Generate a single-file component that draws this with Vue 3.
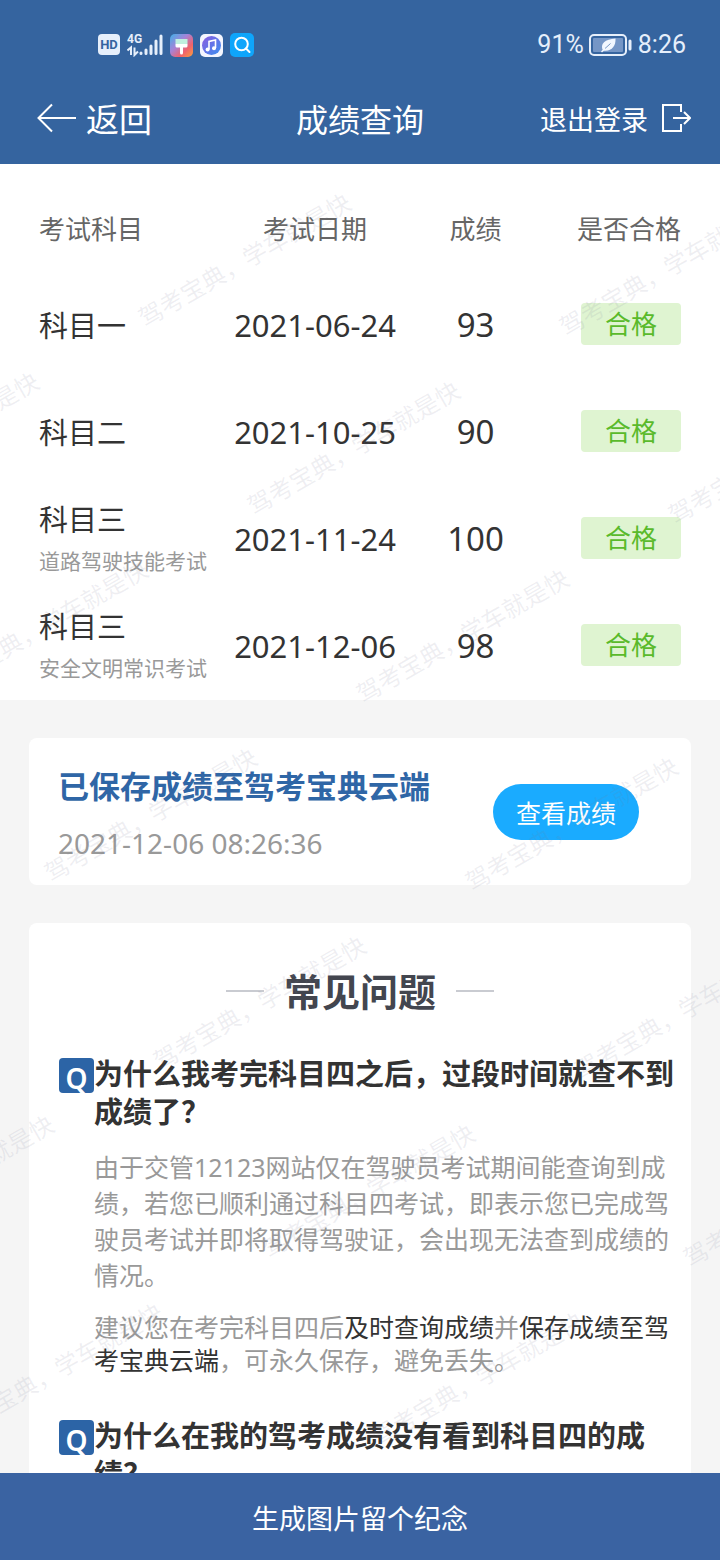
<script setup>
const results = [
  { subject: '科目一', date: '2021-06-24', score: 93 },
  { subject: '科目二', date: '2021-10-25', score: 90 },
  { subject: '科目三', note: '道路驾驶技能考试', date: '2021-11-24', score: 100 },
  { subject: '科目三', note: '安全文明常识考试', date: '2021-12-06', score: 98 },
]

// the watermark is repeated on a slanted lattice
const marks = []
for (let row = 0; row < 7; row++) {
  for (let col = -2; col < 2; col++) {
    const x = 151 + col * 421 + row * 109
    const y = 314 + col * 9 + row * 188
    if (x > -200 && x < 720) marks.push({ x, y })
  }
}
</script>

<template>
  <div class="screen">
    <header class="top">
      <div class="status">
        <div class="status-left">
          <svg width="22" height="22" viewBox="0 0 22 22">
            <rect x="0" y="0" width="22" height="21" rx="4" fill="#e6effb" />
            <text x="11" y="15" text-anchor="middle" font-size="13" font-weight="700" fill="#35649f">HD</text>
          </svg>
          <svg width="36" height="24" viewBox="0 0 36 24">
            <text x="0" y="10" font-size="12" font-weight="700" fill="#e6effb">4G</text>
            <path d="M0.5 17.5 4 14.5V22M7.500 14.5V22L11 18.5" fill="none" stroke="#e6effb" stroke-width="2" />
            <path d="M14 20v.5M19 17v3.500M24 13v7.500M29 8v12.500M34 3v17.500" stroke="#e6effb" stroke-width="3" stroke-linecap="round" />
          </svg>
          <svg width="23" height="23" viewBox="0 0 23 23">
            <defs>
              <linearGradient id="theme" x1="0" y1="0" x2="1" y2="1">
                <stop offset="0" stop-color="#3fb0e8" />
                <stop offset="0.4" stop-color="#a583d8" />
                <stop offset="0.7" stop-color="#f0626c" />
                <stop offset="1" stop-color="#f9a03c" />
              </linearGradient>
            </defs>
            <rect width="23" height="23" rx="5" fill="url(#theme)" />
            <path d="M5.500 5h12v5h-12z" fill="#bff0df" />
            <path d="M5.500 10h12v2q0 1.500-1.500 1.500h-3v5.500a1.500 1.500 0 0 1-3 0v-5.500H7q-1.500 0-1.500-1.500z" fill="#fff" />
          </svg>
          <svg width="23" height="23" viewBox="0 0 23 23">
            <defs>
              <linearGradient id="music" x1="0" y1="0" x2="1" y2="1">
                <stop offset="0" stop-color="#8b5be0" />
                <stop offset="1" stop-color="#3a8ff0" />
              </linearGradient>
            </defs>
            <rect width="23" height="23" rx="5" fill="#f4f6ff" />
            <circle cx="11.500" cy="11.500" r="9.500" fill="url(#music)" />
            <path d="M9 15.500V7.500l6.500-1.500v8" fill="none" stroke="#fff" stroke-width="1.600" />
            <circle cx="7.600" cy="15.500" r="2" fill="#fff" />
            <circle cx="14" cy="14.200" r="2" fill="#fff" />
          </svg>
          <svg width="24" height="24" viewBox="0 0 24 24">
            <rect width="24" height="24" rx="5" fill="#0fa5fb" />
            <circle cx="11.500" cy="11" r="6.300" fill="none" stroke="#fff" stroke-width="2" />
            <path d="M16 15.500 19.500 19" stroke="#fff" stroke-width="2" stroke-linecap="round" />
          </svg>
        </div>
        <div class="status-right">
          <span>91%</span>
          <svg width="44" height="24" viewBox="0 0 44 24">
            <rect x="1" y="2" width="36" height="20" rx="4" fill="none" stroke="#e6effb" stroke-width="2" />
            <rect x="4" y="5" width="30" height="14" rx="1" fill="#7596c6" />
            <path d="M14 17.500c-3.500-6.500 2-11.500 12.500-12 .5 8-4.500 13.500-12.500 12z" fill="#f2f7ff" />
            <path d="M16 15.500 21.500 10.500" stroke="#7596c6" stroke-width="1" />
            <path d="M12.500 19 16 15.500" stroke="#f2f7ff" stroke-width="1.500" />
            <path d="M41 8v8" stroke="#e6effb" stroke-width="3" stroke-linecap="round" />
          </svg>
          <span>8:26</span>
        </div>
      </div>
      <nav class="nav">
        <a href="#" class="back">
          <svg width="40" height="34" viewBox="0 0 40 34" fill="none" stroke="currentColor" stroke-width="2">
            <path d="M15 1.500 1.500 15 15 28.500M1.500 15H39" />
          </svg>
          返回
        </a>
        <h1>成绩查询</h1>
        <a href="#" class="logout">
          退出登录
          <svg width="30" height="34" viewBox="0 0 30 34" fill="none" stroke="currentColor" stroke-width="2">
            <path d="M20 9V2H2v26h18v-7M12 15h17M23 9l6 6-6 6" />
          </svg>
        </a>
      </nav>
    </header>

    <main class="content">
      <section class="results">
        <table>
          <colgroup>
            <col class="col-subject" />
            <col class="col-date" />
            <col class="col-score" />
            <col class="col-state" />
          </colgroup>
          <thead>
            <tr>
              <th class="subject">考试科目</th>
              <th>考试日期</th>
              <th>成绩</th>
              <th class="state">是否合格</th>
            </tr>
          </thead>
          <tbody>
            <tr v-for="item in results" :key="item.date">
              <td class="subject">
                {{ item.subject }}
                <small v-if="item.note">{{ item.note }}</small>
              </td>
              <td class="date">{{ item.date }}</td>
              <td class="score">{{ item.score }}</td>
              <td class="state"><span class="badge">合格</span></td>
            </tr>
          </tbody>
        </table>
      </section>

      <section class="card saved">
        <div class="saved-text">
          <h2>已保存成绩至驾考宝典云端</h2>
          <time datetime="2021-12-06T08:26:36">2021-12-06 08:26:36</time>
        </div>
        <button type="button" class="view">查看成绩</button>
      </section>

      <section class="card faq">
        <h2 class="faq-title">常见问题</h2>
        <article class="item">
          <span class="q">Q</span>
          <div class="item-body">
            <h3>为什么我考完科目四之后，过段时间就查不到成绩了？</h3>
            <p class="answer">由于交管12123网站仅在驾驶员考试期间能查询到成绩，若您已顺利通过科目四考试，即表示您已完成驾驶员考试并即将取得驾驶证，会出现无法查到成绩的情况。</p>
            <p class="advice">建议您在考完科目四后<strong>及时查询成绩</strong>并<strong>保存成绩至驾考宝典云端</strong>，可永久保存，避免丢失。</p>
          </div>
        </article>
        <article class="item">
          <span class="q">Q</span>
          <div class="item-body">
            <h3>为什么在我的驾考成绩没有看到科目四的成绩？</h3>
          </div>
        </article>
      </section>
    </main>

    <div class="watermark" aria-hidden="true">
      <span v-for="(mark, i) in marks" :key="i" :style="{ left: mark.x + 'px', top: mark.y + 'px' }">驾考宝典，学车就是快</span>
    </div>

    <button type="button" class="generate">生成图片留个纪念</button>
  </div>
</template>

<style>
body {
  margin: 0;
}
</style>

<style scoped>
.screen {
  position: relative;
  display: flex;
  flex-direction: column;
  height: 100vh;
  overflow: hidden;
  background: #f5f5f5;
  color: #333;
  font-family: "Noto Sans", "Noto Sans CJK SC", sans-serif;
}

h1,
h2,
h3,
p {
  margin: 0;
}

button {
  border: 0;
  font-family: inherit;
  color: #fff;
  cursor: pointer;
}

a {
  color: inherit;
  text-decoration: none;
}

svg {
  display: block;
  flex-shrink: 0;
}

.top {
  position: relative;
  z-index: 2;
  flex-shrink: 0;
  padding-bottom: 14px;
  background: #35649f;
  color: #fff;
}

.status {
  display: flex;
  justify-content: space-between;
  align-items: center;
  height: 90px;
  padding: 0 34px 0 98px;
  color: #e6effb;
}

.status-left,
.status-right {
  display: flex;
  align-items: center;
}

.status-left {
  gap: 7px;
  font-family: Roboto, sans-serif;
}

.status-right {
  gap: 5px;
  font: 25px/32px Roboto, sans-serif;
}

.nav {
  display: grid;
  grid-template-columns: 1fr auto 1fr;
  align-items: center;
  height: 60px;
  padding: 0 29px;
}

.nav h1 {
  font-size: 32px;
  font-weight: 400;
  line-height: 60px;
}

.back,
.logout {
  display: flex;
  align-items: center;
  line-height: 60px;
}

.back {
  gap: 9px;
  padding-left: 8px;
  font-size: 33px;
}

.logout {
  justify-content: flex-end;
  gap: 13px;
  font-size: 27px;
}

.content {
  flex: 1;
  min-height: 0;
  overflow-y: auto;
  scrollbar-width: none;
}

.results {
  padding: 0 39px;
  background: #fff;
}

table {
  width: 100%;
  table-layout: fixed;
  border-collapse: collapse;
  text-align: center;
}

.col-subject {
  width: 28%;
}

.col-date {
  width: 30%;
}

.col-score {
  width: 20%;
}

.col-state {
  width: 22%;
}

th,
td {
  padding: 0;
  white-space: nowrap;
}

th {
  height: 88px;
  padding-top: 20px;
  font-size: 26px;
  font-weight: 400;
  color: #666;
}

td {
  height: 107px;
}

td.subject {
  font-size: 29px;
  line-height: 42px;
}

.subject {
  text-align: left;
}

.subject small {
  display: block;
  font-size: 21px;
  line-height: 40px;
  color: #999;
}

.date,
.score {
  height: 105px;
  padding-bottom: 2px;
}

.date {
  font-size: 31px;
}

.score {
  font-size: 33px;
}

.state {
  text-align: right;
}

td.state {
  height: 103px;
  padding-bottom: 4px;
}

.badge {
  display: inline-block;
  width: 100px;
  border-radius: 4px;
  background: #dff4d1;
  color: #5aba2b;
  font-size: 26px;
  line-height: 42px;
  text-align: center;
  vertical-align: middle;
}

.card {
  margin: 38px 29px 0;
  border-radius: 8px;
  background: #fff;
}

.saved {
  display: flex;
  justify-content: space-between;
  align-items: center;
  padding: 20px 52px 20px 29px;
}

.saved-text {
  padding-top: 6px;
}

.saved h2 {
  margin-bottom: 13px;
  font-size: 31px;
  line-height: 44px;
  color: #2f66a6;
}

.saved time {
  display: block;
  font-size: 28px;
  line-height: 44px;
  color: #999;
}

.view {
  width: 146px;
  height: 56px;
  padding: 0;
  border-radius: 28px;
  background: #1aabff;
  font-size: 25px;
}

.faq {
  padding: 40px 12px 40px 30px;
}

.faq-title {
  display: flex;
  justify-content: center;
  align-items: center;
  gap: 20px;
  padding-right: 18px;
  font-size: 38px;
  line-height: 56px;
  color: #43464f;
}

.faq-title::before,
.faq-title::after {
  content: "";
  width: 38px;
  height: 2px;
  background: #c9cbd1;
}

.item {
  display: flex;
  margin-top: 36px;
}

.item + .item {
  margin-top: 40px;
}

.q {
  flex-shrink: 0;
  width: 35px;
  height: 35px;
  margin-top: 3px;
  border-radius: 4px;
  background: #2c64a6;
  color: #fff;
  font-size: 28px;
  font-weight: 600;
  line-height: 41px;
  text-align: center;
}

.item-body {
  flex: 1;
}

.item h3 {
  font-size: 29px;
  line-height: 38px;
}

.item p {
  margin-top: 18px;
  font-size: 25px;
  color: #999;
}

.answer {
  line-height: 36px;
}

.advice {
  line-height: 33px;
}

.item strong {
  font-weight: 400;
  color: #333;
}

.watermark {
  position: absolute;
  inset: 0;
  z-index: 1;
  overflow: hidden;
  pointer-events: none;
}

/* each mark turns around the centre of its first character */
.watermark span {
  position: absolute;
  margin: -18px 0 0 -12px;
  font-size: 24px;
  line-height: 36px;
  white-space: nowrap;
  color: rgba(120, 125, 150, 0.12);
  transform: rotate(-30deg);
  transform-origin: 12px 18px;
}

.generate {
  position: relative;
  z-index: 2;
  flex-shrink: 0;
  height: 87px;
  padding: 2px 0 0;
  background: #3a63a2;
  font-size: 27px;
}
</style>
